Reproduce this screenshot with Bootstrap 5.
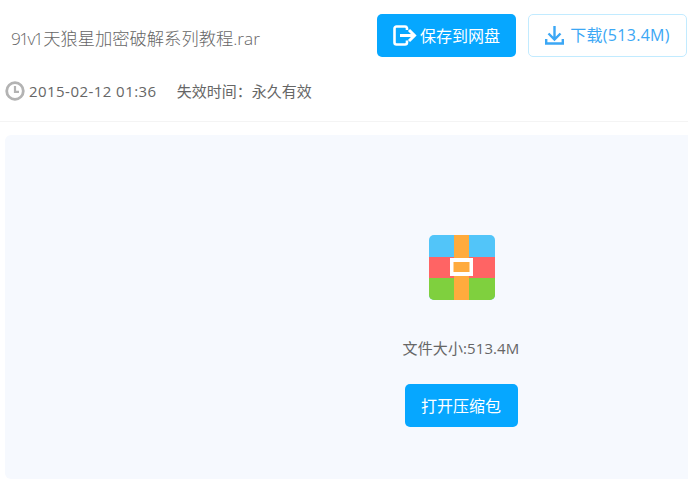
<!DOCTYPE html>
<html lang="zh-CN">
<head>
  <meta charset="UTF-8" />
  <meta name="viewport" content="width=device-width, initial-scale=1.0"/>
  <title>91v1天狼星加密破解系列教程.rar</title>
  <link href="https://cdn.jsdelivr.net/npm/bootstrap@5.3.0/dist/css/bootstrap.min.css" rel="stylesheet">
  <style>
    html, body { height: 479px; overflow: hidden; }
    body { font-family: "Open Sans", "Noto Sans CJK SC", sans-serif; color: #666; background: #fff; }
    .file-head { height: 122px; padding: 14px 1px 0 11px; border-bottom: 1px solid #f4f4f4; margin-bottom: 13px; }
    .file-title { font-size: 17.3px; font-weight: 300; color: #666; margin: 0; line-height: 24px; padding-top: 13px; }
    .title-num { letter-spacing: -1.600px; margin-right: 1px; }
    .btn-save, .btn-down, .btn-open { border-radius: 5px; display: flex; align-items: center; justify-content: center; }
    .btn-save { width: 139px; height: 43px; background: #06a7ff; border: 0; color: #fff; font-size: 16px; gap: 3px; }
    .btn-down { width: 159px; height: 43px; background: #fff; border: 1px solid #c2ebff; color: #3ba7f5; font-size: 16px; letter-spacing: .3px; gap: 6px; margin-left: 12px; padding-bottom: 2px; }
    .file-meta { font-size: 15px; height: 22px; margin-top: 23px; margin-left: -6px; color: #666; }
    .meta-date { letter-spacing: .45px; }
    .file-panel { height: 344px; margin-left: 5px; background: #f6f9fe; border-radius: 6px 0 0 6px; padding: 100px 0 0 298px; }
    .file-size { font-size: 15px; letter-spacing: .1px; line-height: 20px; margin: 38px 0 26px; }
    .btn-open { width: 113px; height: 43px; background: #06a7ff; border: 0; color: #fff; font-size: 16px; }
    .panel-col { width: 316px; }
    .rar-icon { margin-left: 1px; }
  </style>
</head>
<body>

<!-- Header -->
<div class="file-head">
  <div class="d-flex justify-content-between align-items-start">
    <h1 class="file-title"><span class="title-num">91v1</span>天狼星加密破解系列教程.rar</h1>
    <div class="d-flex">
      <button class="btn-save">
        <svg width="24" height="21" viewBox="0 0 24 21" fill="none" stroke="#fff"><path d="M14 5V3A2 2 0 0 0 12 1.500H3.500A2 2 0 0 0 1.500 3.500V17.500A2 2 0 0 0 3.500 19.500H12A2 2 0 0 0 14 17.500V15.500" stroke-width="2.600"/><path d="M7 10.500H21M16 5L21.500 10.500L16 16" stroke-width="3"/></svg>
        保存到网盘
      </button>
      <button class="btn-down">
        <svg width="19" height="20" viewBox="0 0 19 20" fill="none" stroke="#3ba7f5" stroke-width="2.400"><path d="M9.500 1V14M3.500 8.500L9.500 14.500L15.500 8.500M1.200 14V18.500H17.800V14"/></svg>
        下载(513.4M)
      </button>
    </div>
  </div>
  <div class="file-meta d-flex align-items-center">
    <svg class="me-1" width="20" height="20" viewBox="0 0 20 20" fill="none" stroke="#b3b3b3" stroke-width="2.800"><circle cx="10" cy="10" r="8.300"/><path d="M10 5V10.800H14" stroke-width="2.200"/></svg>
    <span class="meta-date">2015-02-12 01:36</span>
    <span class="ms-3 ps-1">失效时间：永久有效</span>
  </div>
</div>

<!-- Preview -->
<div class="file-panel">
  <div class="panel-col d-flex flex-column align-items-center">
    <svg class="rar-icon" width="66" height="65" viewBox="0 0 66 65">
      <rect width="66" height="65" rx="5" fill="#52c5f9"/>
      <path d="M0 22H66V43H0Z" fill="#ff6464"/>
      <path d="M0 43H66V60A5 5 0 0 1 61 65H5A5 5 0 0 1 0 60Z" fill="#7fd03e"/>
      <rect x="25" width="15" height="65" fill="#ffab3d"/>
      <rect x="21" y="23" width="23" height="18" fill="#fff"/>
      <rect x="24.500" y="27" width="16" height="10" fill="#ffab3d"/>
    </svg>
    <div class="file-size">文件大小:513.4M</div>
    <button class="btn-open">打开压缩包</button>
  </div>
</div>

<script src="https://cdn.jsdelivr.net/npm/bootstrap@5.3.0/dist/js/bootstrap.bundle.min.js"></script>
</body>
</html>
